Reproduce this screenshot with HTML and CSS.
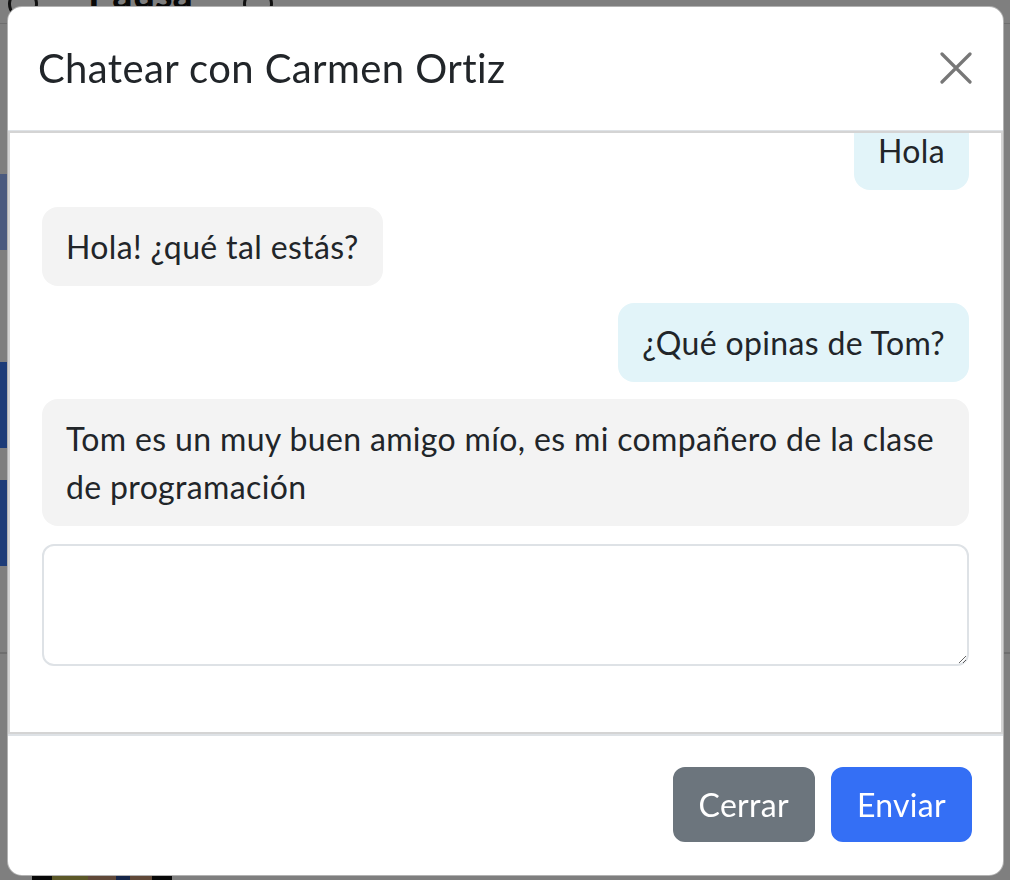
FILE: index.html
```html
<!DOCTYPE html>
<html lang="es">
<head>
<meta charset="utf-8">
<title>Chatear con Carmen Ortiz</title>
<link rel="stylesheet" href="styles.css">
</head>
<body>
<div class="page">
  <div class="topbar">
    <span class="ring"></span>
    <span class="brand">Pausa</span>
    <span class="ring"></span>
  </div>
  <div class="main">
    <div class="side">
      <div class="tile tile-light"></div>
      <div class="tile tile-dark"></div>
      <div class="tile tile-dark"></div>
    </div>
  </div>
  <div class="photo"></div>
</div>

<div class="backdrop"></div>

<div class="modal">
  <div class="modal-header">
    <h5 class="modal-title">Chatear con Carmen Ortiz</h5>
    <button class="btn-close" aria-label="Cerrar">
      <svg width="32" height="32" viewBox="0 0 32 32"><path d="M2 2 L30 30 M30 2 L2 30" stroke="#777" stroke-width="3.2" stroke-linecap="round" fill="none"/></svg>
    </button>
  </div>
  <div class="chat">
    <div class="msg sent">Hola</div>
    <div class="msg recv">Hola! ¿qué tal estás?</div>
    <div class="msg sent">¿Qué opinas de Tom?</div>
    <div class="msg recv">Tom es un muy buen amigo mío, es mi compañero de la clase de programación</div>
    <textarea class="input"></textarea>
  </div>
  <div class="modal-footer">
    <button class="btn btn-secondary">Cerrar</button>
    <button class="btn btn-primary">Enviar</button>
  </div>
</div>
</body>
</html>
```

FILE: styles.css
```css
* { box-sizing: border-box; }

html, body {
  margin: 0;
  padding: 0;
  height: 100%;
  overflow: hidden;
  background: #fff;
  font-family: Lato, "Noto Sans", sans-serif;
  color: #212529;
}

/* ---------- page behind the backdrop ---------- */
.page {
  height: 880px;
  display: flex;
  flex-direction: column;
}
.topbar {
  height: 24px;
  display: flex;
  align-items: flex-end;
  gap: 50px;
  padding: 0 0 0 8px;
  border-bottom: 1px solid #ddd;
  overflow: hidden;
}
.ring {
  width: 30px;
  height: 30px;
  border: 3px solid #222;
  border-radius: 50%;
  margin-bottom: 4px;
}
.brand {
  font-size: 40px;
  font-weight: 700;
  line-height: 40px;
  margin-bottom: 10px;
  color: #111;
}
.main {
  flex: 1;
  display: flex;
  border-bottom: 2px solid #ddd;
  margin-bottom: 196px;
}
.side {
  width: 20px;
  padding-top: 150px;
  display: flex;
  flex-direction: column;
}
.tile { width: 20px; }
.tile-light { height: 76px; background: #94b4ff; margin-bottom: 112px; }
.tile-dark { height: 86px; background: #3a78f0; margin-bottom: 32px; }
.photo {
  width: 140px;
  height: 30px;
  margin-left: 32px;
  margin-top: auto;
  background: linear-gradient(90deg, #111 0 14%, #b8b050 14% 40%, #c09070 40% 60%, #2a4a90 60% 70%, #c09070 70% 86%, #111 86%);
}

/* ---------- overlay ---------- */
.backdrop {
  position: fixed;
  inset: 0;
  background: rgba(0, 0, 0, 0.5);
}

.modal {
  position: fixed;
  top: 6px;
  left: 7px;
  width: 997px;
  height: 870px;
  background: #fff;
  border: 1px solid rgba(0, 0, 0, 0.3);
  border-radius: 15px;
  display: flex;
  flex-direction: column;
  overflow: hidden;
}

.modal-header {
  display: flex;
  align-items: center;
  justify-content: space-between;
  padding: 31px 31px 32px 30px;
  border-bottom: 1px solid #dee2e6;
}
.modal-title {
  margin: 0;
  font-size: 40px;
  font-weight: 400;
  line-height: 60px;
  letter-spacing: 0.4px;
}
.btn-close {
  border: 0;
  background: transparent;
  padding: 0;
  width: 32px;
  height: 32px;
  display: flex;
  cursor: pointer;
}

.chat {
  height: 603px;
  border: 2px solid #d4d4d4;
  padding: 0 32px 66px 32px;
  display: flex;
  flex-direction: column;
  justify-content: flex-end;
  overflow: hidden;
}
.msg {
  flex: none;
  font-size: 32px;
  line-height: 48px;
  letter-spacing: 0.35px;
  padding: 15.5px 24px;
  border-radius: 16px;
  margin-bottom: 17px;
  max-width: 100%;
}
.sent {
  align-self: flex-end;
  background: #e2f4f9;
}
.recv {
  align-self: flex-start;
  background: #f3f3f3;
}
.input {
  flex: none;
  width: 100%;
  height: 122px;
  margin-top: 1px;
  border: 2px solid #dee2e6;
  border-radius: 12px;
  font-family: inherit;
  font-size: 32px;
  resize: vertical;
}

.modal-footer {
  flex: 1;
  display: flex;
  justify-content: flex-end;
  align-items: flex-start;
  gap: 16px;
  padding: 31px 31px 0 0;
  border-top: 2px solid #dee2e6;
}
.btn {
  font-family: inherit;
  font-size: 32px;
  line-height: 48px;
  letter-spacing: 0.3px;
  height: 75px;
  padding: 0 24px;
  border: 2px solid transparent;
  border-radius: 12px;
  color: #fff;
  cursor: pointer;
}
.btn-secondary { background: #6c757d; border-color: #6c757d; }
.btn-primary { background: #346ff5; border-color: #346ff5; }
```
